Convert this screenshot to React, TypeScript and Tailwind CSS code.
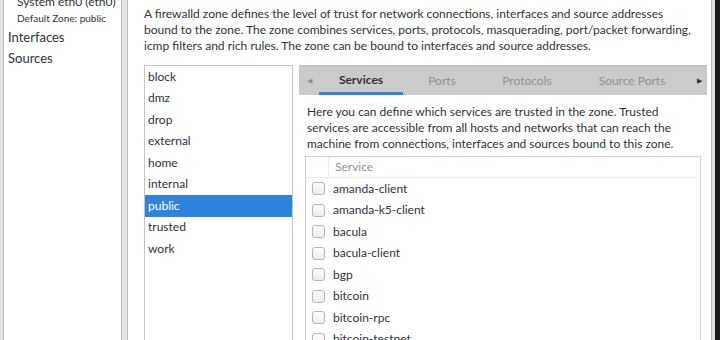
import React from 'react';

const ZONES = ['block', 'dmz', 'drop', 'external', 'home', 'internal', 'public', 'trusted', 'work'];

const SERVICES = [
  'amanda-client',
  'amanda-k5-client',
  'bacula',
  'bacula-client',
  'bgp',
  'bitcoin',
  'bitcoin-rpc',
  'bitcoin-testnet',
];

const TABS = [
  { label: 'Services', w: 'w-[84px]', active: true },
  { label: 'Ports', w: 'w-[78px]', active: false },
  { label: 'Protocols', w: 'w-[92px]', active: false },
  { label: 'Source Ports', w: 'w-[118px]', active: false },
];

function Checkbox() {
  return (
    <span className="block size-[13px] rounded-[3px] border border-[#b6b6b3] bg-gradient-to-b from-[#ffffff] to-[#ececec]" />
  );
}

function ZoneList() {
  return (
    <div className="w-[149px] shrink-0 self-stretch border border-[#c4c4c1] bg-white">
      {ZONES.map((z) => (
        <div
          key={z}
          className={
            z === 'public'
              ? 'flex h-[21.5px] items-center bg-[#3083dc] pl-[3px] text-white'
              : 'flex h-[21.5px] items-center pl-[3px] text-[#2e3436]'
          }
        >
          {z}
        </div>
      ))}
    </div>
  );
}

function ServicesTab() {
  return (
    <div className="flex min-w-0 flex-1 flex-col">
      <div className="flex h-[30px] shrink-0 items-stretch border-t border-[#bdbdbb] bg-[#cbcbca]">
        <div className="flex w-[20px] items-center justify-center text-[7px] text-[#8e9192]">◀</div>
        {TABS.map((t) => (
          <div
            key={t.label}
            className={
              t.active
                ? `${t.w} flex items-center justify-center border-b-[3px] border-[#3083dc] pt-[2px] font-bold text-[#2e3436]`
                : `${t.w} flex items-center justify-center text-[#8e9192]`
            }
          >
            {t.label}
          </div>
        ))}
        <div className="flex flex-1 items-center justify-center text-[7px] text-[#2e3436]">▶</div>
      </div>
      <div className="flex flex-1 flex-col bg-white px-[6px]">
        <p className="whitespace-nowrap pl-[2px] pt-[9px] leading-[16px] text-[#2e3436]">
          Here you can define which services are trusted in the zone. Trusted
          <br />
          services are accessible from all hosts and networks that can reach the
          <br />
          machine from connections, interfaces and sources bound to this zone.
        </p>
        <div className="mt-[4px] flex-1 border border-[#cfcfcd] bg-white">
          <div className="flex h-[21px] border-b border-[#ececea]">
            <div className="w-[23px] border-r border-[#ececea]" />
            <div className="flex items-center pl-[6px] text-[#919191]">Service</div>
          </div>
          {SERVICES.map((s) => (
            <div key={s} className="flex h-[21.5px] items-center">
              <div className="flex w-[23px] justify-center pl-[1px]">
                <Checkbox />
              </div>
              <span className="pl-[4px] text-[#2e3436]">{s}</span>
            </div>
          ))}
        </div>
      </div>
    </div>
  );
}

export default function App() {
  return (
    <div className="flex h-[340px] w-[720px] overflow-hidden bg-[#e8e8e7] font-['Lato',sans-serif] text-[12px] text-[#2e3436]">
      <div className="w-[3px] shrink-0 bg-[#e4e4e3]" />
      <aside className="w-[119px] shrink-0 border-x border-[#bdbdbb] bg-white">
        <div className="-mt-[5px] pl-[13px] text-[12px] leading-[14px]">System eth0 (eth0)</div>
        <div className="pl-[13px] pt-[2px] text-[10px] leading-[14px]">Default Zone: public</div>
        <div className="flex h-[21px] items-center pl-[4px] pt-[4px] text-[13px]">Interfaces</div>
        <div className="flex h-[21px] items-center pl-[4px] pt-[4px] text-[13px]">Sources</div>
      </aside>
      <div className="w-[5px] shrink-0 bg-[#e4e4e3]" />
      <main className="flex w-[585px] shrink-0 flex-col border-x border-[#bdbdbb] bg-white pl-[16px] pr-[4px]">
        <p className="whitespace-nowrap pt-[6px] leading-[16px]">
          A firewalld zone defines the level of trust for network connections, interfaces and source addresses
          <br />
          bound to the zone. The zone combines services, ports, protocols, masquerading, port/packet forwarding,
          <br />
          icmp filters and rich rules. The zone can be bound to interfaces and source addresses.
        </p>
        <div className="mt-[11px] flex flex-1 gap-[6px]">
          <ZoneList />
          <ServicesTab />
        </div>
      </main>
      <div className="w-[3px] shrink-0 bg-[#e0e0df]" />
      <div className="flex-1 bg-[#1b1b1b]" />
    </div>
  );
}
